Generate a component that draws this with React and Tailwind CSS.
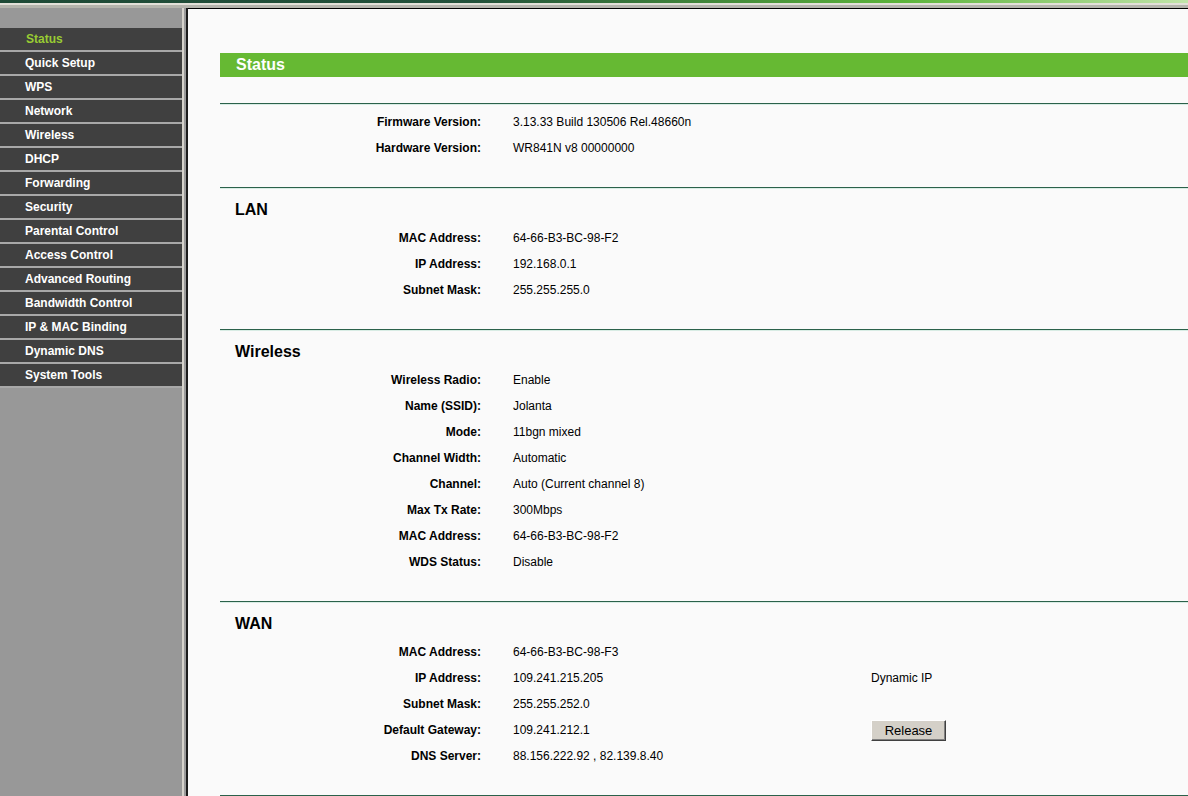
import React from "react";

const menu = [
  "Status",
  "Quick Setup",
  "WPS",
  "Network",
  "Wireless",
  "DHCP",
  "Forwarding",
  "Security",
  "Parental Control",
  "Access Control",
  "Advanced Routing",
  "Bandwidth Control",
  "IP & MAC Binding",
  "Dynamic DNS",
  "System Tools",
];

const sections = [
  {
    title: null,
    rows: [
      ["Firmware Version:", "3.13.33 Build 130506 Rel.48660n"],
      ["Hardware Version:", "WR841N v8 00000000"],
    ],
  },
  {
    title: "LAN",
    rows: [
      ["MAC Address:", "64-66-B3-BC-98-F2"],
      ["IP Address:", "192.168.0.1"],
      ["Subnet Mask:", "255.255.255.0"],
    ],
  },
  {
    title: "Wireless",
    rows: [
      ["Wireless Radio:", "Enable"],
      ["Name (SSID):", "Jolanta"],
      ["Mode:", "11bgn mixed"],
      ["Channel Width:", "Automatic"],
      ["Channel:", "Auto (Current channel 8)"],
      ["Max Tx Rate:", "300Mbps"],
      ["MAC Address:", "64-66-B3-BC-98-F2"],
      ["WDS Status:", "Disable"],
    ],
  },
  {
    title: "WAN",
    rows: [
      ["MAC Address:", "64-66-B3-BC-98-F3"],
      ["IP Address:", "109.241.215.205", "Dynamic IP"],
      ["Subnet Mask:", "255.255.252.0"],
      ["Default Gateway:", "109.241.212.1", "button"],
      ["DNS Server:", "88.156.222.92 , 82.139.8.40"],
    ],
  },
];

const Row = ({ label, value, extra }) => (
  <div className="flex h-[26px] items-center">
    <div className="w-[261px] text-right font-bold">{label}</div>
    <div className="w-[390px] pl-[32px] whitespace-nowrap">{value}</div>
    {extra === "button" ? (
      <button className="h-[21px] w-[75px] bg-[#d4d0c8] border border-t-white border-l-white border-b-[#404040] border-r-[#404040] text-[13px] text-black leading-none shadow-[inset_-1px_-1px_0_#808080]">
        Release
      </button>
    ) : (
      <div>{extra}</div>
    )}
  </div>
);

const Divider = () => (
  <div>
    <div className="h-px bg-[#2b614a]" />
    <div className="h-px bg-[#d8ece4]" />
  </div>
);

export default function App() {
  return (
    <div className="w-[1188px] h-[796px] overflow-hidden bg-[#999999] font-['Liberation_Sans',Arial,sans-serif] text-[12px] text-black">
      {/* top band */}
      <div className="h-[3px] bg-[linear-gradient(to_right,#1e4a36_0%,#22513a_40%,#5cb43a_76%,#c2e5aa_100%)]" />
      <div className="h-[2px] bg-[#e2e0d8]" />
      <div className="h-[3px] bg-[#b4b4ac]" />

      <div className="flex h-[788px]">
        {/* sidebar */}
        <div className="w-[182px] shrink-0 bg-[#989898] pt-[20px]">
          {menu.map((item, i) => (
            <div key={item}>
              <div
                className={`h-[22px] bg-[#404040] flex items-center font-bold ${
                  i === 0 ? "pl-[26px] text-[#99cc33]" : "pl-[25px] text-white"
                }`}
              >
                {item}
              </div>
              <div className="h-[2px] bg-[#a8a8a8]" />
            </div>
          ))}
        </div>
        <div className="w-[2px] shrink-0 bg-[#d6d3cc]" />
        <div className="w-[2px] shrink-0 bg-[#9a9a9a]" />
        <div className="w-[2px] shrink-0 bg-[#1c1c1c]" />

        {/* content */}
        <div className="flex-1 bg-[#fafafa] border-t border-black pl-[32px] pt-[44px]">
          <div className="h-[24px] bg-[#66b933] flex items-center pl-[16px] text-white font-bold text-[16px]">
            Status
          </div>
          <div className="h-[26px]" />
          {sections.map((s, i) => (
            <div key={i}>
              <Divider />
              {s.title ? (
                <>
                  <div className="mt-[10px] h-[22px] flex items-center pl-[15px] font-bold text-[16px]">
                    {s.title}
                  </div>
                  <div className="h-[4px]" />
                </>
              ) : (
                <div className="h-[4px]" />
              )}
              {s.rows.map((r, j) => (
                <Row key={j} label={r[0]} value={r[1]} extra={r[2]} />
              ))}
              <div className="h-[26px]" />
            </div>
          ))}
          <Divider />
        </div>
      </div>
    </div>
  );
}
